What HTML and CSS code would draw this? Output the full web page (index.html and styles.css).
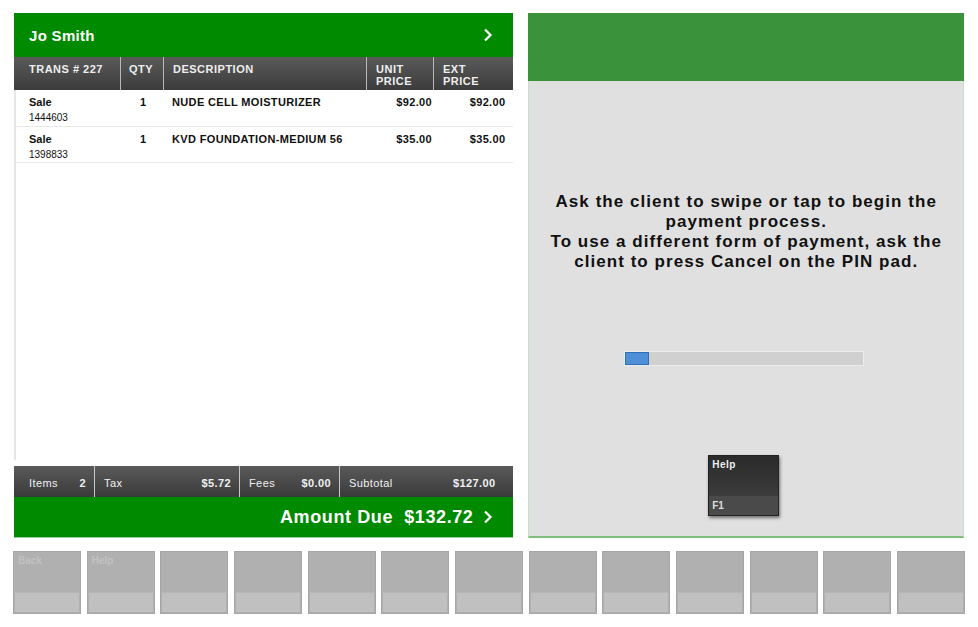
FILE: index.html
```html
<!DOCTYPE html>
<html>
<head>
<meta charset="utf-8">
<link rel="stylesheet" href="styles.css">
</head>
<body>
<div class="screen">
  <div class="main">
    <div class="left">
      <div class="client">
        <span>Jo Smith</span>
        <svg class="chev" width="10" height="14" viewBox="0 0 10 14"><path d="M2 1.5 L7.5 7 L2 12.5" fill="none" stroke="#fff" stroke-width="2.2"/></svg>
      </div>
      <div class="thead">
        <div class="th">TRANS # 227</div>
        <div class="th">QTY</div>
        <div class="th">DESCRIPTION</div>
        <div class="th">UNIT<br>PRICE</div>
        <div class="th">EXT<br>PRICE</div>
      </div>
      <div class="list">
        <div class="row">
          <div class="c1"><b>Sale</b><span>1444603</span></div>
          <div class="c2">1</div>
          <div class="c3">NUDE CELL MOISTURIZER</div>
          <div class="c4">$92.00</div>
          <div class="c5">$92.00</div>
        </div>
        <div class="row">
          <div class="c1"><b>Sale</b><span>1398833</span></div>
          <div class="c2">1</div>
          <div class="c3">KVD FOUNDATION-MEDIUM 56</div>
          <div class="c4">$35.00</div>
          <div class="c5">$35.00</div>
        </div>
      </div>
      <div class="summary">
        <div class="sc s1"><span>Items</span><span>2</span></div>
        <div class="sc s2"><span>Tax</span><span>$5.72</span></div>
        <div class="sc s3"><span>Fees</span><span>$0.00</span></div>
        <div class="sc s4"><span>Subtotal</span><span>$127.00</span></div>
      </div>
      <div class="due">
        <span>Amount Due&nbsp;&nbsp;$132.72</span>
        <svg class="chev" width="10" height="14" viewBox="0 0 10 14"><path d="M2 1.5 L7.5 7 L2 12.5" fill="none" stroke="#fff" stroke-width="2.2"/></svg>
      </div>
    </div>
    <div class="right">
      <div class="rhead"></div>
      <div class="rbody">
        <p class="msg">Ask the client to swipe or tap to begin the payment process.<br>To use a different form of payment, ask the client to press Cancel on the PIN pad.</p>
        <div class="progress"><div class="fill"></div></div>
        <div class="helpkey">
          <div class="hk-top">Help</div>
          <div class="hk-bot">F1</div>
        </div>
      </div>
    </div>
  </div>
  <div class="keys">
    <div class="key"><div class="k-top">Back</div><div class="k-bot"></div></div>
    <div class="key"><div class="k-top">Help</div><div class="k-bot"></div></div>
    <div class="key"><div class="k-top"></div><div class="k-bot"></div></div>
    <div class="key"><div class="k-top"></div><div class="k-bot"></div></div>
    <div class="key"><div class="k-top"></div><div class="k-bot"></div></div>
    <div class="key"><div class="k-top"></div><div class="k-bot"></div></div>
    <div class="key"><div class="k-top"></div><div class="k-bot"></div></div>
    <div class="key"><div class="k-top"></div><div class="k-bot"></div></div>
    <div class="key"><div class="k-top"></div><div class="k-bot"></div></div>
    <div class="key"><div class="k-top"></div><div class="k-bot"></div></div>
    <div class="key"><div class="k-top"></div><div class="k-bot"></div></div>
    <div class="key"><div class="k-top"></div><div class="k-bot"></div></div>
    <div class="key"><div class="k-top"></div><div class="k-bot"></div></div>
  </div>
</div>
</body>
</html>
```
FILE: styles.css
```css
* { box-sizing: border-box; }
html, body { margin: 0; padding: 0; background: #fff; }
body {
  font-family: "Liberation Sans", Arial, sans-serif;
  width: 978px;
  height: 627px;
  overflow: hidden;
}
.screen {
  padding: 13px 14px 0 13px;
}
.main {
  display: flex;
  gap: 15px;
  height: 525px;
}
.left {
  width: 500px;
  margin-left: 1px;
  display: flex;
  flex-direction: column;
}
.client {
  height: 44px;
  background: #008a00;
  color: #fff;
  font-weight: bold;
  font-size: 15px;
  letter-spacing: 0.3px;
  display: flex;
  align-items: center;
  justify-content: space-between;
  padding: 0 20px 0 15px;
}
.client span { margin-top: 1px; }
.thead {
  height: 33px;
  display: grid;
  grid-template-columns: 106px 43px 203px 67px 1fr;
  background: linear-gradient(#5a5a5a, #3c3c3c);
}
.th {
  color: #eee;
  font-weight: bold;
  font-size: 11px;
  letter-spacing: 0.5px;
  line-height: 12px;
  padding: 6px 0 0 9px;
  border-left: 1px solid #b8b8b8;
}
.th:first-child { border-left: none; padding-left: 15px; }
.th:nth-child(2) { padding-left: 8px; }
.list {
  flex: 1;
  border-left: 2px solid #e6e6e6;
  margin-bottom: 6px;
}
.row {
  height: 36.5px;
  display: grid;
  grid-template-columns: 104px 43px 203px 67px 1fr;
  border-bottom: 1px solid #e8e8e8;
  font-size: 11px;
  letter-spacing: 0.35px;
  font-weight: bold;
  color: #111;
  padding-top: 6px;
  line-height: 13px;
}
.c1 { padding-left: 13px; display: flex; flex-direction: column; letter-spacing: 0; }
.c1 span { font-weight: normal; font-size: 10px; margin-top: 2px; }
.c2 { padding-left: 20px; }
.c3 { padding-left: 9px; }
.c4 { text-align: right; padding-right: 1px; }
.c5 { text-align: right; padding-right: 8px; }
.summary {
  height: 31px;
  display: grid;
  grid-template-columns: 80px 145px 100px 1fr;
  background: linear-gradient(#5a5a5a, #3a3a3a);
}
.sc {
  display: flex;
  justify-content: space-between;
  align-items: center;
  color: #f0f0f0;
  font-size: 11px;
  font-weight: bold;
  letter-spacing: 0.4px;
  padding: 3px 8px 0 9px;
  border-left: 1px solid #c8c8c8;
}
.sc span:first-child { font-weight: normal; }
.s1 { border-left: none; padding-left: 15px; }
.s4 { padding-right: 18px; }
.due {
  height: 41px;
  background: #008a00;
  color: #fff;
  font-weight: bold;
  font-size: 18px;
  letter-spacing: 0.6px;
  display: flex;
  align-items: center;
  justify-content: flex-end;
  gap: 10px;
  padding-right: 20px;
  border-bottom: 1px solid #9ccf9c;
}
.right {
  width: 436px;
  display: flex;
  flex-direction: column;
  border: 1px solid #c9dcc9;
  border-bottom: 2px solid #7fbf7f;
}
.rhead {
  height: 68px;
  background: #3a923a;
  margin: -1px -1px 0 -1px;
}
.rbody {
  flex: 1;
  background: #e0e0e0;
  display: flex;
  flex-direction: column;
  align-items: center;
}
.msg {
  margin: 111px 0 0 0;
  width: 410px;
  text-align: center;
  font-weight: bold;
  font-size: 17px;
  line-height: 20px;
  color: #111;
  letter-spacing: 1.05px;
}
.progress {
  margin-top: 79px;
  width: 240px;
  height: 15px;
  background: #d0d0d0;
  border: 1px solid #ececec;
  margin-left: -4px;
}
.fill {
  width: 24px;
  height: 100%;
  background: #4d8fd6;
  border: 1px solid #2f6fb8;
}
.helpkey {
  margin-top: 89px;
  width: 71px;
  height: 61px;
  display: flex;
  flex-direction: column;
  box-shadow: 1px 2px 3px rgba(0,0,0,0.5);
  border: 1px solid #222;
  margin-left: -5px;
}
.hk-top {
  height: 40px;
  background: linear-gradient(#2a2a2a, #3c3c3c);
  color: #eee;
  font-size: 10px;
  font-weight: bold;
  letter-spacing: 0.5px;
  padding: 3px 0 0 3px;
}
.hk-bot {
  flex: 1;
  background: #4a4a4a;
  color: #ddd;
  font-size: 10px;
  font-weight: bold;
  padding: 4px 0 0 3px;
}
.keys {
  display: flex;
  gap: 5.5px;
  margin-top: 13px;
  width: 952px;
}
.key {
  flex: 1;
  height: 63px;
  display: flex;
  flex-direction: column;
  border: 1px solid #a6a6a6;
  background: #c0c0c0;
}
.k-top {
  height: 41px;
  background: #b0b0b0;
  color: #c2c2c2;
  font-size: 10px;
  font-weight: bold;
  padding: 3px 0 0 4px;
  border-bottom: 1px solid #b6b6b6;
}
.k-bot {
  flex: 1;
  background: #c0c0c0;
  border: 1px solid #b0b0b0;
  border-top: none;
}
```
